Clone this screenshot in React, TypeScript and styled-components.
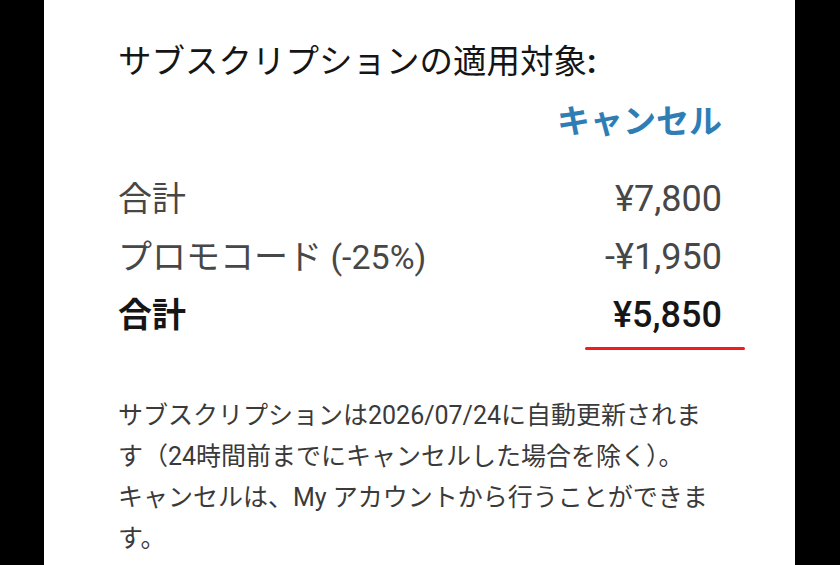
import React from 'react';
import styled, { createGlobalStyle } from 'styled-components';

const GlobalStyle = createGlobalStyle`
  html, body {
    margin: 0;
    padding: 0;
    background: #000000;
  }
  body {
    font-family: Roboto, "Noto Sans CJK JP", sans-serif;
  }
`;

const Page = styled.div`
  width: 840px;
  height: 565px;
  overflow: hidden;
  background: #000000;
`;

const Card = styled.div`
  box-sizing: border-box;
  width: 751px;
  height: 565px;
  margin-left: 44px;
  padding: 40px 73px 0 74px;
  background: #ffffff;
  display: flex;
  flex-direction: column;
`;

const Title = styled.h1`
  margin: 0;
  font-size: 33.5px;
  font-weight: 400;
  line-height: 44px;
  color: #151515;
`;

const Colon = styled.span`
  font-weight: 700;
`;

const CancelLink = styled.a`
  align-self: flex-end;
  margin-top: 16px;
  font-size: 33px;
  font-weight: 700;
  line-height: 44px;
  color: #2f7db5;
  text-decoration: none;
  cursor: pointer;
`;

const Summary = styled.div`
  margin-top: 26px;
  display: flex;
  flex-direction: column;
`;

const Row = styled.div<{ $total?: boolean }>`
  position: relative;
  display: flex;
  justify-content: space-between;
  align-items: baseline;
  height: 58px;
  line-height: 58px;
  font-size: 34px;
  font-weight: ${p => (p.$total ? 700 : 400)};
  color: ${p => (p.$total ? '#161616' : '#474747')};
`;

const Amount = styled.span<{ $total?: boolean }>`
  font-size: 36px;
  font-weight: ${p => (p.$total ? 500 : 400)};
`;

const Underline = styled.span`
  position: absolute;
  right: -23px;
  bottom: -6px;
  width: 160px;
  height: 3px;
  border-radius: 2px;
  background: #f21c1c;
`;

const Note = styled.p`
  margin: 51px 0 0;
  font-size: 25px;
  line-height: 41px;
  color: #3a3a3a;
`;

const rows = [
  { label: '合計', amount: '¥7,800' },
  { label: 'プロモコード (-25%)', amount: '-¥1,950' },
];

export default function App() {
  return (
    <Page>
      <GlobalStyle />
      <Card>
        <Title>
          サブスクリプションの適用対象<Colon>:</Colon>
        </Title>
        <CancelLink>キャンセル</CancelLink>
        <Summary>
          {rows.map(r => (
            <Row key={r.label}>
              <span>{r.label}</span>
              <Amount>{r.amount}</Amount>
            </Row>
          ))}
          <Row $total>
            <span>合計</span>
            <Amount $total>¥5,850</Amount>
            <Underline />
          </Row>
        </Summary>
        <Note>
          サブスクリプションは2026/07/24に自動更新されます（24時間前までにキャンセルした場合を除く）。
          <br />
          キャンセルは、My アカウントから行うことができます。
        </Note>
      </Card>
    </Page>
  );
}
